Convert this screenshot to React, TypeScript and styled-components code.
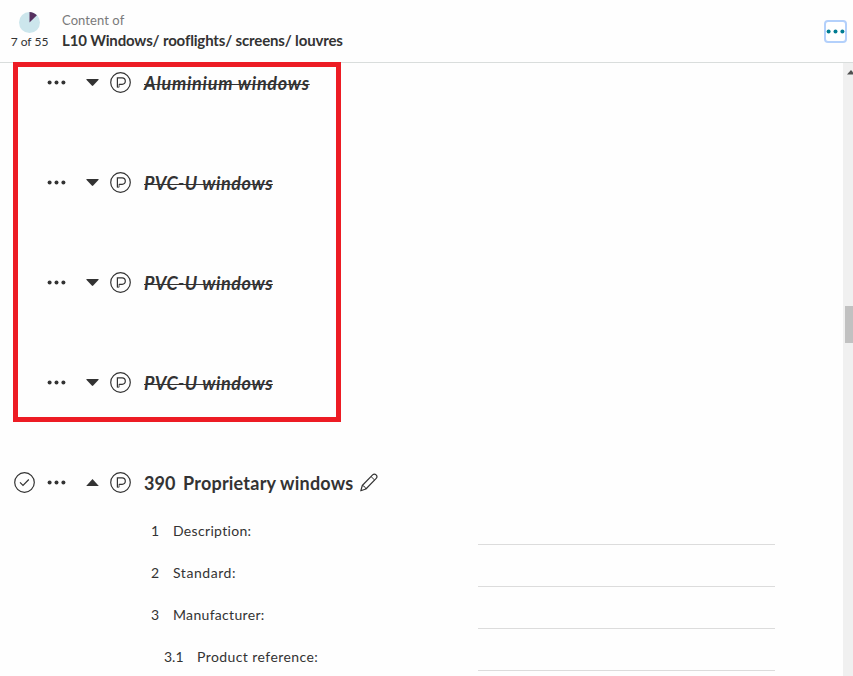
import React from "react";
import styled, { createGlobalStyle } from "styled-components";

interface clauseType {
  id: number;
  title: string;
  spacing: number;
}

interface fieldType {
  num: string;
  label: string;
  nested?: boolean;
  spacing: number;
}

const deletedClauses: clauseType[] = [
  { id: 1, title: "Aluminium windows", spacing: 0.73 },
  { id: 2, title: "PVC-U windows", spacing: 0.55 },
  { id: 3, title: "PVC-U windows", spacing: 0.55 },
  { id: 4, title: "PVC-U windows", spacing: 0.55 },
];

const fields: fieldType[] = [
  { num: "1", label: "Description:", spacing: 0.32 },
  { num: "2", label: "Standard:", spacing: 0.55 },
  { num: "3", label: "Manufacturer:", spacing: 0.32 },
  { num: "3.1", label: "Product reference:", nested: true, spacing: 0.42 },
];

const Dots = () => (
  <svg width="19" height="5" viewBox="0 0 19 5" fill="currentColor">
    <circle cx="2.6" cy="2.5" r="2" />
    <circle cx="9.5" cy="2.5" r="2" />
    <circle cx="16.4" cy="2.5" r="2" />
  </svg>
);

const Caret = ({ open }: { open?: boolean }) => (
  <svg width="13" height="7" viewBox="0 0 13 7" fill="currentColor">
    <path d={open ? "M6.5 0 12.8 7H.2z" : "M.9 0h11.2q1 .2.3 1.1L7.2 6.6q-.7.6-1.4 0L.6 1.1Q-.1.2.9 0z"} />
  </svg>
);

const ProductIcon = () => (
  <svg width="21" height="21" viewBox="0 0 21 21" fill="none" stroke="currentColor" strokeWidth="1.2">
    <circle cx="10.5" cy="10.5" r="9.8" />
    <path d="M7.4 15.6V5.9h4.7a3.2 3.2 0 0 1 0 6.4H9.1" />
    <path d="M9.1 12v3.2H7.4" strokeWidth="0.8" />
  </svg>
);

const CheckIcon = () => (
  <svg width="21" height="21" viewBox="0 0 21 21" fill="none" stroke="currentColor" strokeWidth="1.2">
    <circle cx="10.5" cy="10.5" r="9.8" />
    <path d="M6 10.4 9 13.4 14.8 7.5" />
  </svg>
);

const PencilIcon = () => (
  <svg width="18" height="19" viewBox="0 0 18 19" fill="none" stroke="currentColor" strokeWidth="1.2" strokeLinejoin="round">
    <path d="M.8 17.8 2.3 12.5 12.6 1.9q1.8-1.6 3.5 0 1.7 1.7.1 3.5L5.9 16z" />
    <path d="M2.3 12.5q2.8.4 3.6 3.5M11 3.5l3.6 3.5" strokeWidth="1" />
  </svg>
);

const App = () => {
  return (
    <>
      <GlobalStyle />
      <Page>
        <Header>
          <Progress>
            <svg width="21" height="21" viewBox="0 0 21 21">
              <circle cx="10.5" cy="10.5" r="10.5" fill="#cce6ec" />
              <path d="M10.5 10.5V0a10.5 10.5 0 0 1 7.4 3.3z" fill="#56305f" />
            </svg>
            <ProgressText>7 of 55</ProgressText>
          </Progress>
          <Heading>
            <Eyebrow>Content of</Eyebrow>
            <Title>L10 Windows/ rooflights/ screens/ louvres</Title>
          </Heading>
          <MenuButton aria-label="More options">
            <Dots />
          </MenuButton>
        </Header>
        <Body>
          <Content>
            {deletedClauses.map((item) => (
              <Clause key={item.id}>
                <span />
                <Dots />
                <Caret />
                <ProductIcon />
                <DeletedTitle $spacing={item.spacing}>{item.title}</DeletedTitle>
              </Clause>
            ))}
            <Clause $open>
              <CheckIcon />
              <Dots />
              <Caret open />
              <ProductIcon />
              <ClauseTitle>
                <ClauseNumber>390</ClauseNumber>
                <ClauseName>Proprietary windows</ClauseName>
                <PencilIcon />
              </ClauseTitle>
            </Clause>
            {fields.map((item) => (
              <Field key={item.num}>
                <FieldLabel $nested={item.nested}>
                  <span>{item.num}</span>
                  <FieldName $spacing={item.spacing}>{item.label}</FieldName>
                </FieldLabel>
                <FieldValue />
              </Field>
            ))}
          </Content>
          <Scrollbar>
            <svg width="8" height="5" viewBox="0 0 8 5" fill="#505050">
              <path d="M4 0 8 4.5H0z" />
            </svg>
            <Thumb />
          </Scrollbar>
          <Highlight />
        </Body>
      </Page>
    </>
  );
};

const GlobalStyle = createGlobalStyle`
  * {
    box-sizing: border-box;
  }
  body {
    margin: 0;
    overflow: hidden;
    background: #fefefe;
    color: #333;
    font-family: Lato, "Liberation Sans", sans-serif;
    font-variant-ligatures: none;
  }
  svg {
    display: block;
    flex: none;
  }
`;

const Page = styled.div`
  display: flex;
  flex-direction: column;
  height: 676px;
  overflow: hidden;
`;

const Header = styled.header`
  display: flex;
  flex: none;
  height: 63px;
  padding-right: 6px;
  border-bottom: 1px solid #d9dddc;
`;

const Progress = styled.div`
  display: flex;
  flex-direction: column;
  align-items: center;
  width: 59px;
  padding-top: 12px;
`;

const ProgressText = styled.span`
  margin-top: 1px;
  font-size: 12px;
  line-height: 16px;
  white-space: nowrap;
`;

const Heading = styled.div`
  flex: 1;
  padding: 10px 0 0 3px;
`;

const Eyebrow = styled.p`
  margin: 0;
  color: #7a7a7a;
  font-size: 13px;
  line-height: 20px;
  letter-spacing: 0.08px;
`;

const Title = styled.h1`
  margin: 0;
  font-size: 15px;
  font-weight: 700;
  line-height: 21px;
  letter-spacing: -0.15px;
  white-space: nowrap;
`;

const MenuButton = styled.button`
  display: flex;
  align-items: center;
  justify-content: center;
  width: 23px;
  height: 23px;
  margin-top: 20px;
  padding: 0;
  border: 2px solid #b3d0fb;
  border-radius: 4px;
  background: #fff;
  color: #007c92;
`;

const Body = styled.main`
  position: relative;
  display: flex;
  flex: 1;
  min-height: 0;
`;

const Content = styled.div`
  flex: 1;
`;

const Clause = styled.div<{ $open?: boolean }>`
  display: grid;
  grid-template-columns: 33px 39px 24px 34px 1fr;
  align-items: center;
  height: 39px;
  margin-bottom: ${({ $open }) => ($open ? 1 : 61)}px;
  padding-left: 14px;
`;

const DeletedTitle = styled.h2<{ $spacing: number }>`
  margin: 0;
  padding-top: 1px;
  font-size: 18px;
  font-style: italic;
  font-weight: 700;
  line-height: 24px;
  letter-spacing: ${({ $spacing }) => $spacing}px;
  text-decoration: line-through 1px;
  justify-self: start;
`;

const ClauseTitle = styled.h2`
  display: flex;
  align-items: center;
  margin: 0;
  font-size: 18px;
  font-weight: 700;
  line-height: 24px;
`;

const ClauseNumber = styled.span`
  width: 39px;
`;

const ClauseName = styled.span`
  width: 177px;
  letter-spacing: 0.22px;
  white-space: nowrap;
`;

const Field = styled.div`
  display: flex;
  height: 42px;
  padding-right: 68px;
`;

const FieldLabel = styled.div<{ $nested?: boolean }>`
  display: grid;
  grid-template-columns: ${({ $nested }) => ($nested ? "33px" : "22px")} 1fr;
  width: 478px;
  padding: 18px 0 0 ${({ $nested }) => ($nested ? 164 : 151)}px;
  font-size: 14px;
  line-height: 20px;
`;

const FieldName = styled.span<{ $spacing: number }>`
  letter-spacing: ${({ $spacing }) => $spacing}px;
`;

const FieldValue = styled.div`
  flex: 1;
  border-bottom: 1px solid #dcdcdc;
`;

const Scrollbar = styled.div`
  width: 10px;
  overflow: hidden;
  padding: 7px 0 0 4px;
  background: #f0f0f0;
`;

const Thumb = styled.div`
  width: 8px;
  height: 37px;
  margin: 231px 0 0 -2px;
  background: #c1c1c1;
`;

const Highlight = styled.div`
  position: absolute;
  top: -1px;
  left: 13px;
  width: 328px;
  height: 360px;
  border: 5px solid #ed1c24;
  pointer-events: none;
`;

export default App;
